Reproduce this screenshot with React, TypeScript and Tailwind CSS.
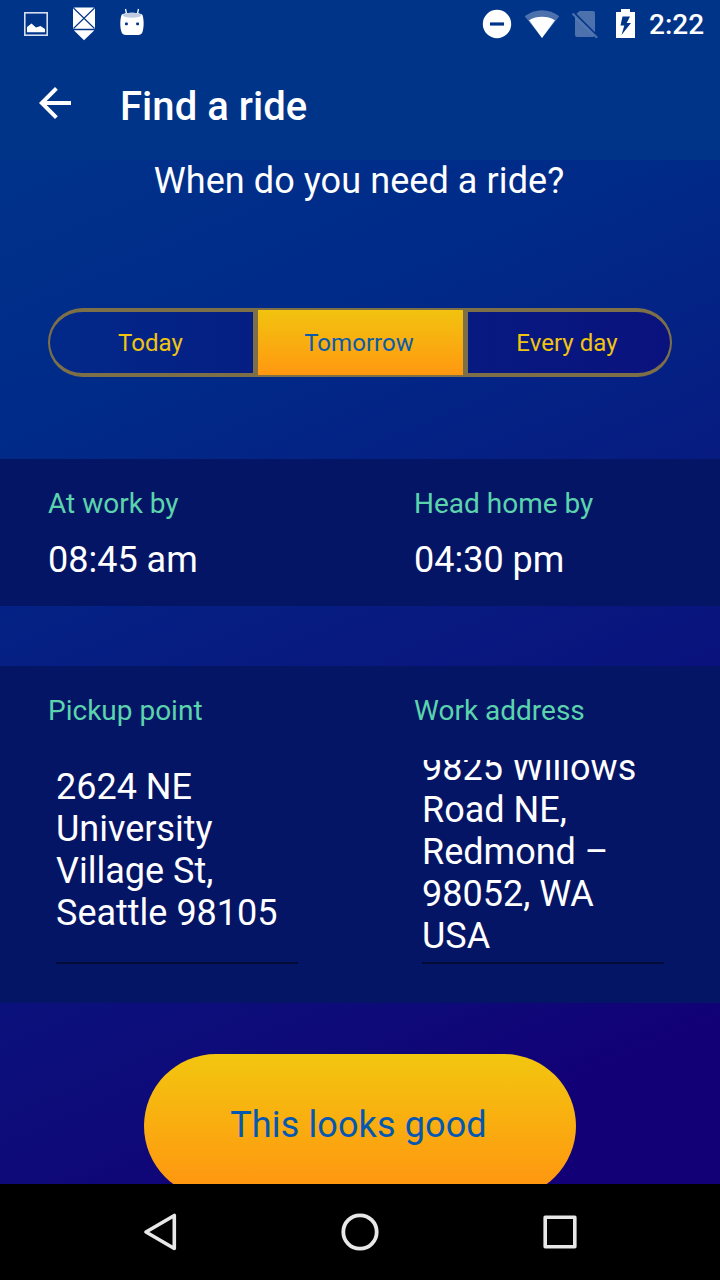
import React from "react";

const days = ["Today", "Tomorrow", "Every day"];

function StatusBar() {
  return (
    <div className="flex h-12 shrink-0 items-center justify-between bg-[#003489] text-white">
      <svg width="160" height="48" viewBox="0 0 160 48" fill="none">
        <rect x="24.8" y="12.8" width="22.4" height="22.4" stroke="#d5deee" strokeWidth="1.6" />
        <path d="M27 32.300V27l4.500-3.600 4.500 4 4.500-1.500L45 29v3.300z" fill="#fff" />
        <path d="M74.500 7.500h19a1.500 1.500 0 0 1 1.500 1.500v19.700H73V9a1.500 1.500 0 0 1 1.500-1.500z" fill="#fff" />
        <path d="M73.500 8l21 20.500M94.500 8l-21 20.500" stroke="#003489" strokeWidth="1.100" />
        <path d="M73.800 30.300h20.600L84 40.300z" fill="#fff" />
        <path d="M126.800 15l-1.300-6M137.200 15l1.300-6" stroke="#fff" strokeWidth="1.300" />
        <path d="M121.500 15c2-3 19-3 21 0 1.600 5 1.400 12 .300 16-.600 2.700-2 4-4.800 4h-12c-2.800 0-4.200-1.300-4.800-4-1.100-4-1.300-11 .300-16z" fill="#fff" />
        <ellipse cx="132" cy="15.200" rx="9.200" ry="2.500" fill="#c0cce2" />
        <rect x="125" y="22.500" width="2.800" height="2.800" rx=".8" fill="#003489" />
        <rect x="136.200" y="22.500" width="2.800" height="2.800" rx=".8" fill="#003489" />
      </svg>
      <div className="flex items-center pr-4">
        <svg width="168" height="48" viewBox="476 0 168 48" fill="none">
          <circle cx="497" cy="24" r="14.200" fill="#fff" />
          <path d="M490 24h14" stroke="#003489" strokeWidth="3.200" />
          <path d="M542 38L524.700 16.200c10-8 24.600-8 34.600 0z" fill="#fff" fillOpacity=".3" />
          <path d="M542 38L529 20.200c7.500-4.600 18.500-4.600 26 0z" fill="#fff" />
          <path d="M579.500 11H593a2 2 0 0 1 2 2v19.300L576.500 13.800zM575 17l19.300 19.300q-.5.700-1.500.700H577a2 2 0 0 1-2-2z" fill="#fff" fillOpacity=".3" />
          <path d="M572.500 13.500l24.600 24.300" stroke="#fff" strokeOpacity=".3" strokeWidth="2.200" />
          <path d="M621 9h9v3h5v26h-19V12h5zM622.500 16.500L620.500 25.500h3.800L621.500 35l9.500-12h-4.300l3.300-6.500z" fill="#fff" fillRule="evenodd" />
        </svg>
        <span className="ml-[5px] w-[55px] pt-px text-[28px] leading-[33px] font-medium">2:22</span>
      </div>
    </div>
  );
}

function Toolbar() {
  return (
    <header className="flex h-28 shrink-0 items-start bg-[#003489] pl-[31px]">
      <svg className="mt-[31px]" width="48" height="48" viewBox="0 0 24 24" fill="#fff">
        <path d="M20 11H7.830l5.590-5.590L12 4l-8 8 8 8 1.410-1.410L7.830 13H20v-2z" />
      </svg>
      <h1 className="mt-[35px] ml-[41px] text-[40px] leading-[47px] font-medium tracking-[0.05px]">Find a ride</h1>
    </header>
  );
}

function DayPicker() {
  const shapes = [
    "w-[209px] rounded-l-[34.5px] border-y-[4px] border-r-[4px] border-l-[2px] bg-linear-to-r from-[#022989] to-[#051e84] text-[#f1c40f] pr-[2px]",
    "w-[207px] border-y-[2px] border-x-[1px] bg-linear-to-b from-[#f1c40f] to-[#ff9610] bg-origin-border text-[#0a5cab] pr-[3px]",
    "w-[208px] rounded-r-[34.5px] border-y-[4px] border-l-[4px] border-r-[2px] bg-linear-to-r from-[#071a82] to-[#0a127d] text-[#f1c40f] pr-[4px]",
  ];
  return (
    <div className="mx-12 mt-[106px] flex h-[69px] shrink-0">
      {days.map((day, i) => (
        <button
          key={day}
          className={"flex items-center justify-center border-[#7d7049] text-2xl leading-7 tracking-[0.05px] " + shapes[i]}
        >
          {day}
        </button>
      ))}
    </div>
  );
}

function TimeField({ label, value }: { label: string; value: string }) {
  return (
    <div className="w-[366px] shrink-0">
      <div className="text-[28px] leading-[33px] text-[#5bd4ae]">{label}</div>
      <div className="mt-[19px] text-4xl leading-[42px]">{value}</div>
    </div>
  );
}

function AddressField({ label, lines }: { label: string; lines: string[] }) {
  return (
    <div className="w-[366px] shrink-0">
      <div className="text-[28px] leading-[33px] text-[#5bd4ae]">{label}</div>
      <div
        className={
          "mt-[33px] ml-2 flex h-[204px] w-[242px] flex-col overflow-hidden border-b-2 border-[#020c36] text-4xl leading-[42px] whitespace-nowrap " +
          (lines.length > 4 ? "justify-end pb-[5px]" : "justify-start pt-[6px]")
        }
      >
        {lines.map((line) => (
          <div key={line} className="shrink-0">{line}</div>
        ))}
      </div>
    </div>
  );
}

function NavBar() {
  return (
    <nav className="flex h-24 shrink-0 items-center justify-center gap-[152px] bg-black">
      <svg width="48" height="48" viewBox="0 0 48 48" fill="none" stroke="#e8e8e8" strokeWidth="3.600" strokeLinejoin="round">
        <path d="M10 24L38.300 7.500v33z" />
      </svg>
      <svg width="48" height="48" viewBox="0 0 48 48" fill="none" stroke="#e8e8e8" strokeWidth="3.800">
        <circle cx="24" cy="24" r="16.700" />
      </svg>
      <svg width="48" height="48" viewBox="0 0 48 48" fill="none" stroke="#e8e8e8" strokeWidth="3.600" strokeLinejoin="round">
        <rect x="9.200" y="9.200" width="29.600" height="29.600" />
      </svg>
    </nav>
  );
}

export default function App() {
  return (
    <div className="flex h-[1280px] w-[720px] flex-col overflow-hidden bg-black font-[Roboto,sans-serif] text-white">
      <StatusBar />
      <Toolbar />
      <main className="flex h-[1024px] shrink-0 flex-col overflow-hidden bg-[linear-gradient(157deg,#00328b_0%,#002a88_22%,#042285_34%,#071b81_45%,#0a137d_60%,#0e0a79_77%,#120077_88%)]">
        <h2 className="shrink-0 pr-[2px] text-center text-4xl leading-[42px] tracking-[0.08px]">When do you need a ride?</h2>
        <DayPicker />
        <section className="mt-[82px] flex h-[147px] shrink-0 bg-[#051565] pt-7 pl-12">
          <TimeField label="At work by" value="08:45 am" />
          <TimeField label="Head home by" value="04:30 pm" />
        </section>
        <section className="mt-[60px] flex h-[337px] shrink-0 bg-[#051565] pt-7 pl-12">
          <AddressField label="Pickup point" lines={["2624 NE", "University", "Village St,", "Seattle 98105"]} />
          <AddressField label="Work address" lines={["9825 Willows", "Road NE,", "Redmond –", "98052, WA", "USA"]} />
        </section>
        <button className="mx-auto mt-[51px] h-36 w-[432px] shrink-0 rounded-full bg-linear-to-b from-[#f2c60f] to-[#ff9210] pr-[3px] pb-[3px] text-4xl leading-[42px] tracking-[0.12px] text-[#0558b0]">
          This looks good
        </button>
      </main>
      <NavBar />
    </div>
  );
}
